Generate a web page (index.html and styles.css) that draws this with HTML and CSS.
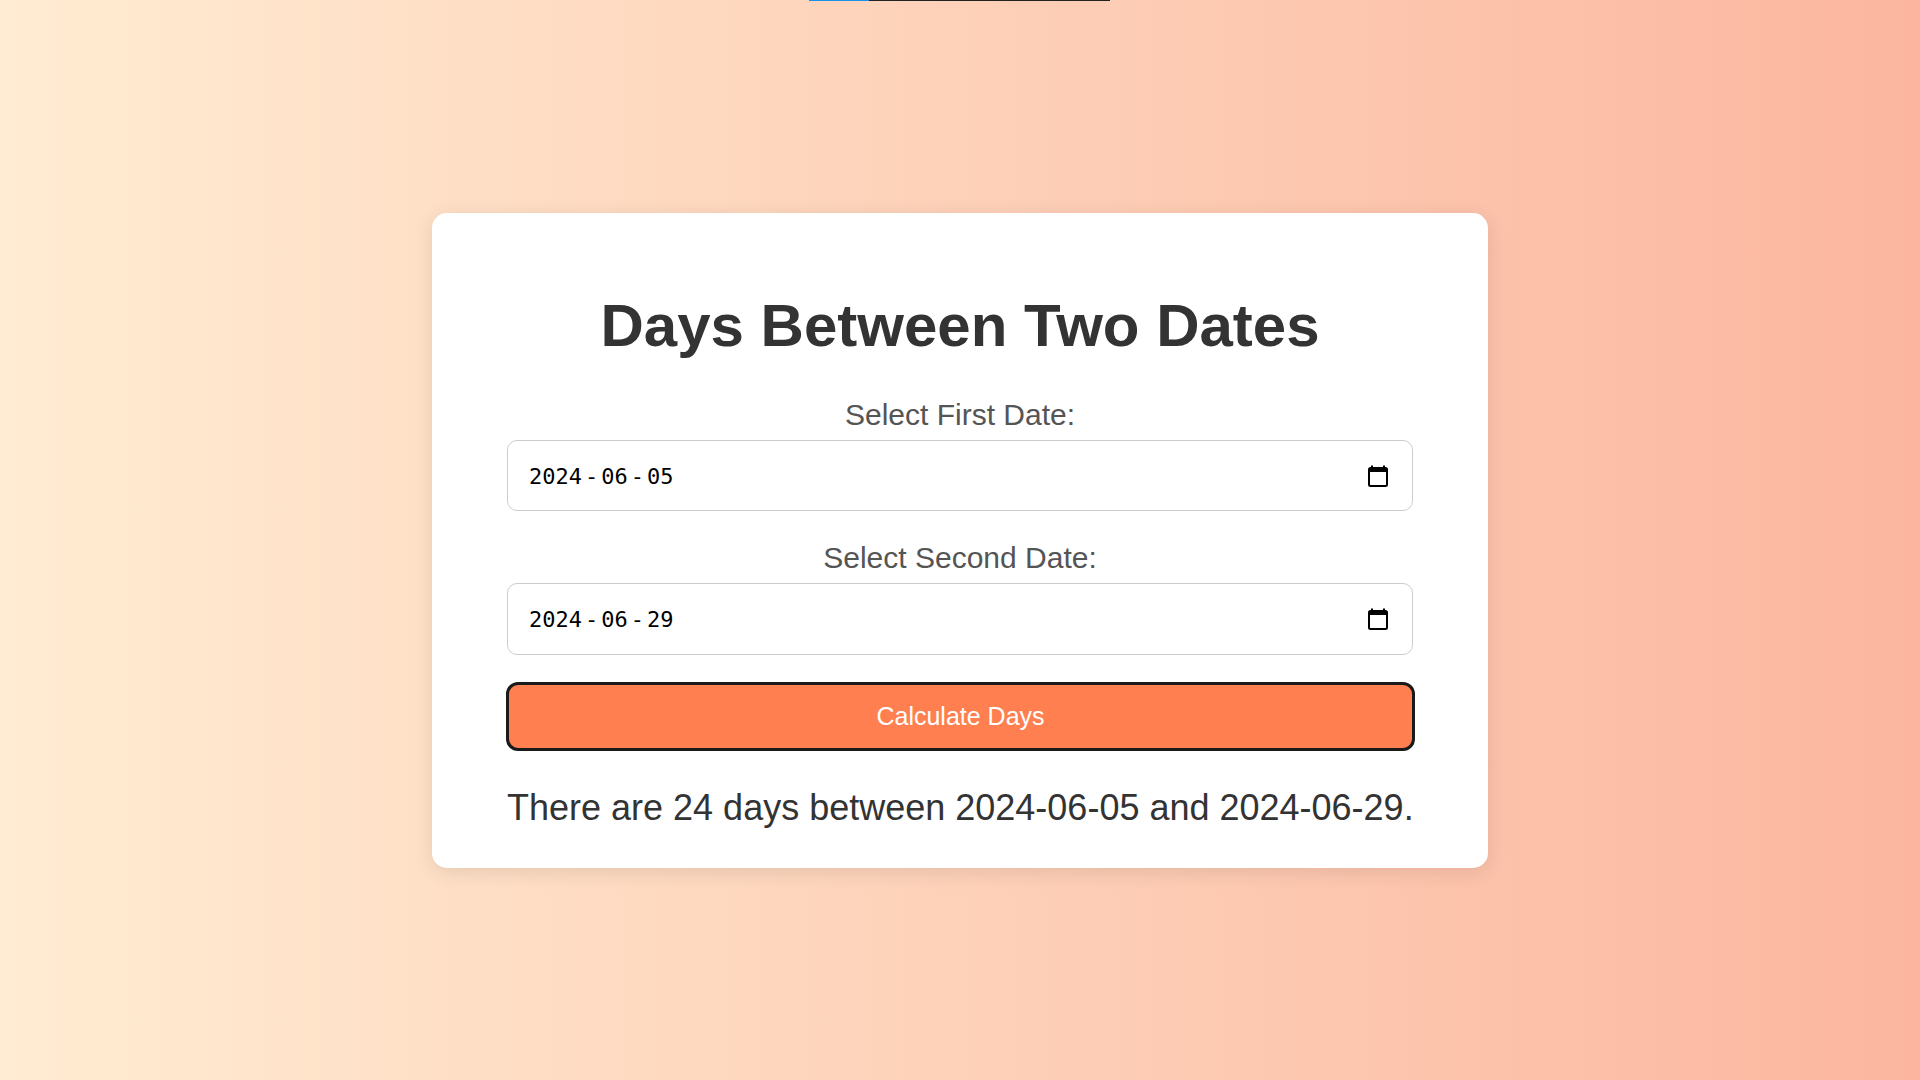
FILE: index.html
```html
<!DOCTYPE html>
<html lang="en">
<head>
  <meta charset="UTF-8"/>
  <meta name="viewport" content="width=device-width,initial-scale=1"/>
  <title>Days Between Two Dates</title>
  <link rel="stylesheet" href="styles.css">
</head>
<body>
  <div class="topbar"></div>
  <main class="card">
    <h1>Days Between Two Dates</h1>
    <label>Select First Date:</label>
    <div class="date-field" id="date1">
      <span class="date-value"><span>2024</span><span class="sep">-</span><span>06</span><span class="sep">-</span><span>05</span></span>
      <svg class="cal" viewBox="0 0 20 22" width="20" height="22">
        <rect x="1" y="3" width="18" height="18" rx="1.5" fill="none" stroke="#000" stroke-width="2"/>
        <rect x="1" y="3" width="18" height="4" fill="#000"/>
        <rect x="3" y="0.5" width="2" height="3" fill="#000"/>
        <rect x="15" y="0.5" width="2" height="3" fill="#000"/>
      </svg>
    </div>
    <label>Select Second Date:</label>
    <div class="date-field" id="date2">
      <span class="date-value"><span>2024</span><span class="sep">-</span><span>06</span><span class="sep">-</span><span>29</span></span>
      <svg class="cal" viewBox="0 0 20 22" width="20" height="22">
        <rect x="1" y="3" width="18" height="18" rx="1.5" fill="none" stroke="#000" stroke-width="2"/>
        <rect x="1" y="3" width="18" height="4" fill="#000"/>
        <rect x="3" y="0.5" width="2" height="3" fill="#000"/>
        <rect x="15" y="0.5" width="2" height="3" fill="#000"/>
      </svg>
    </div>
    <button id="calcBtn">Calculate Days</button>
    <p id="result">There are 24 days between 2024-06-05 and 2024-06-29.</p>
  </main>
</body>
</html>
```

FILE: styles.css
```css
* { box-sizing: border-box; }
body {
  margin: 0; min-height: 100vh;
  display: flex; align-items: center; justify-content: center;
  background: linear-gradient(to right, #ffecd2, #fcb69f);
  font-family: "Liberation Sans", Arial, sans-serif;
}
.topbar {
  position: absolute; top: 0; left: 809px;
  width: 301px; height: 1px;
  background: linear-gradient(to right, #1a8fe6 60px, #222 60px);
}
.card {
  width: 1056px; background: #fff; border-radius: 15px;
  padding: 79px 75px 40px;
  box-shadow: 0 4px 20px rgba(0, 0, 0, .1);
  display: flex; flex-direction: column; align-items: stretch;
}
h1 {
  margin: 0 0 39px; text-align: center;
  font-size: 60px; color: #333; line-height: 67px;
}
label {
  display: block; text-align: center;
  font-size: 30px; color: #555; line-height: 34px;
  margin-bottom: 8px;
}
.date-field {
  display: flex; align-items: center; justify-content: space-between;
  height: 71px; padding: 0 24px 0 21px;
  border: 1px solid #ccc; border-radius: 10px; background: #fff;
  margin-bottom: 30px;
}
.date-value {
  font-family: "DejaVu Sans Mono", monospace; font-size: 22px; color: #000;
  padding-top: 2px;
}
.date-value .sep { margin: 0 3px; }
.cal { display: block; margin-top: 1px; }
#date2 { height: 72px; margin-bottom: 27px; }
button {
  height: 69px; margin: 0 -2px 0 -1px;
  background: #ff7f50; color: #fff;
  border: 3px solid #1a1a1a; border-radius: 12px;
  font-family: "Liberation Sans", Arial, sans-serif; font-size: 25px;
  cursor: pointer;
}
#result {
  margin: 37px 0 0; text-align: center; white-space: nowrap;
  font-size: 36px; color: #333; line-height: 40px;
}
```
